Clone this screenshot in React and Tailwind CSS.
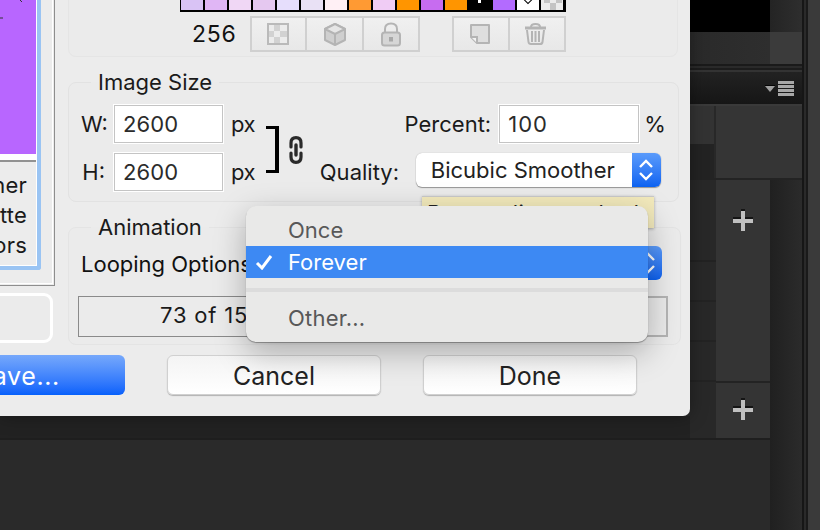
import React from "react";

const font = { fontFamily: "Inter, 'Liberation Sans', sans-serif" };

const swatches = ["#d9c3f5", "#e0b6f5", "#f0d7f5", "#e5c8f0", "#e6defc", "#e9e1f5", "#fff0f5", "#ff9a33", "#f0ccf5", "#ff9500", "#c76cf0", "#ff9500", "#000000", "#b36bff", "#ffffff", "#ececec"];

function Swatch({ color, i }) {
  return (
    <div className="w-[22px] h-[10px] relative overflow-hidden" style={{ background: color }}>
      {i === 12 && <div className="absolute left-[9px] top-0 w-[3px] h-[3px] bg-white" />}
      {i === 14 && <div className="absolute left-[8px] top-[-3px] w-[6px] h-[6px] border border-black rotate-45" />}
      {i === 15 && (
        <svg width="22" height="10" className="absolute left-0 top-0">
          <rect x="3" y="0" width="6" height="3" fill="#c4c4c4" />
          <rect x="9" y="3" width="6" height="7" fill="#c4c4c4" />
          <rect x="15" y="0" width="6" height="3" fill="#c4c4c4" />
        </svg>
      )}
    </div>
  );
}

function IconBtn({ children, last, w }) {
  return (
    <div className={`h-full flex items-center justify-center ${w} ${last ? "" : "border-r-2 border-[#d0d0d0]"}`}>
      {children}
    </div>
  );
}

const Checker = () => (
  <svg width="22" height="22" viewBox="0 0 22 22">
    <rect x="1" y="1" width="20" height="20" fill="#ececec" stroke="#bababa" strokeWidth="2" />
    <rect x="7" y="2" width="6" height="6" fill="#d2d2d2" />
    <rect x="13" y="8" width="7" height="6" fill="#d2d2d2" />
    <rect x="2" y="8" width="5" height="6" fill="#d2d2d2" />
    <rect x="7" y="14" width="6" height="6" fill="#d2d2d2" />
  </svg>
);
const Cube = () => (
  <svg width="24" height="25" viewBox="0 0 24 25">
    <path d="M12 2 L22 7 V18 L12 23 L2 18 V7 Z" fill="#cfcfcf" stroke="#b4b4b4" strokeWidth="2" strokeLinejoin="round" />
    <path d="M2 7 L12 12 L22 7 L12 2 Z" fill="#e6e6e6" stroke="#b4b4b4" strokeWidth="2" strokeLinejoin="round" />
    <path d="M12 12 V23" stroke="#b4b4b4" strokeWidth="2" />
  </svg>
);
const Lock = () => (
  <svg width="20" height="25" viewBox="0 0 20 25">
    <path d="M4 11 V7 C4 3.5 6.5 1.5 10 1.5 C13.5 1.5 16 3.5 16 7 V11" fill="none" stroke="#b4b4b4" strokeWidth="2" />
    <rect x="1" y="10.5" width="18" height="13" rx="2.5" fill="#d6d6d6" stroke="#b4b4b4" strokeWidth="2" />
    <rect x="8" y="15" width="4" height="4.5" fill="#a8a8a8" />
  </svg>
);
const Note = () => (
  <svg width="20" height="20" viewBox="0 0 20 20">
    <path d="M1 1 H19 V19 H7 L1 13 Z" fill="#dedede" stroke="#b4b4b4" strokeWidth="2" strokeLinejoin="round" />
    <path d="M1 13 H7 V19" fill="#f2f2f2" stroke="#b4b4b4" strokeWidth="2" />
  </svg>
);
const Trash = () => (
  <svg width="23" height="22" viewBox="0 0 23 22">
    <path d="M1 5 H22" stroke="#b4b4b4" strokeWidth="3" />
    <path d="M7 4 C7 2 8.5 1 11.5 1 C14.5 1 16 2 16 4" fill="none" stroke="#b4b4b4" strokeWidth="2" />
    <path d="M3 7 L4.5 19 C4.7 20.5 6 21 7 21 H16 C17 21 18.3 20.5 18.5 19 L20 7" fill="none" stroke="#b4b4b4" strokeWidth="2" />
    <path d="M8 8 V19 M11.5 8 V19 M15 8 V19" stroke="#b4b4b4" strokeWidth="2" />
  </svg>
);
const Link = () => (
  <svg width="14" height="28" viewBox="0 0 14 28">
    <path d="M2 11 V7 C2 3.5 4 1.7 7 1.7 C10 1.7 12 3.5 12 7 V11 M2 17 V21 C2 24.5 4 26.3 7 26.3 C10 26.3 12 24.5 12 21 V17" fill="none" stroke="#2a2a2a" strokeWidth="3.2" strokeLinecap="round" />
    <path d="M7 9 V19" stroke="#2a2a2a" strokeWidth="3.4" strokeLinecap="round" />
  </svg>
);
const Updown = () => (
  <svg width="18" height="26" viewBox="0 0 18 26">
    <path d="M3 10 L9 4 L15 10 M3 16 L9 22 L15 16" fill="none" stroke="#fff" strokeWidth="2.4" />
  </svg>
);
const Plus = () => (
  <svg width="20" height="22" viewBox="0 0 20 22">
    <rect x="8" y="0" width="4" height="2" fill="#151515" />
    <rect x="0" y="8" width="20" height="2" fill="#151515" />
    <rect x="8" y="2" width="4" height="20" fill="#c0c0c0" />
    <rect x="0" y="10" width="20" height="4" fill="#c0c0c0" />
  </svg>
);

const inputCls = "bg-white border border-[#c4c4c4] outline outline-1 outline-white h-[38px] flex items-center pl-[8px] text-[#2b2b2b]";

function Legend({ children }) {
  return <legend className="ml-[10px] px-[7px] h-[24px] leading-[24px] text-[#1a1a1a]">{children}</legend>;
}

function SizeRow({ label, mt }) {
  return (
    <div className={`flex items-center h-[38px] ${mt}`}>
      <span className="w-[24px] text-right text-[#1a1a1a]">{label}</span>
      <div className={`${inputCls} w-[109px] ml-[9px] tracking-[0.1px]`}>2600</div>
      <span className="ml-[8px] text-[#1a1a1a] tracking-[-0.6px]">px</span>
    </div>
  );
}

function Dialog() {
  return (
    <div className="relative z-10 h-[416px] bg-[#ececec] rounded-br-[7px] overflow-hidden flex flex-col text-[22px] shrink-0 shadow-[0_0_18px_rgba(0,0,0,0.35)]" style={font}>
      <div className="flex h-[343px] shrink-0">
        {/* left column */}
        <div className="w-[55px] shrink-0 flex flex-col">
          <div className="h-[286px] border-r border-b border-[#8e8e8e] pr-[1px] pb-[1px] shrink-0">
            <div className="h-full border-r border-b border-white pr-[11px] pb-[13px]">
              <div className="h-full border-r-[4px] border-b-[4px] border-[#9ac4f3] rounded-br-[3px]">
                <div className="h-full border-r border-b border-white flex flex-col">
                  <div className="h-[154px] bg-[#b866ff] shrink-0 overflow-hidden">
                    <svg width="36" height="20"><path d="M20 0 L22 2 M0 18 H3" stroke="#333" strokeWidth="1" /></svg>
                  </div>
                  <div className="h-[6px] bg-white shrink-0" />
                  <div className="h-[2px] bg-[#929292] shrink-0" />
                  <div className="flex-1 flex flex-col items-end pt-[8px] pr-[9px] text-[#1a1a1a] leading-[30px] overflow-hidden whitespace-nowrap tracking-[0.2px]">
                    <span>Other</span>
                    <span>Palette</span>
                    <span>Colors</span>
                  </div>
                </div>
              </div>
            </div>
          </div>
          <div className="mt-[7px] -ml-[20px] h-[50px] w-[73px] border-[3px] border-white rounded-[9px] bg-[#ebebeb] shrink-0" />
        </div>
        {/* right column */}
        <div className="ml-[13px] w-[610px] shrink-0 flex flex-col">
          <div className="h-[57px] shrink-0 border-x border-b border-[#e5e5e5] rounded-b-[8px] bg-[#ebebeb]">
            <div className="ml-[111px] w-[386px] bg-black flex gap-[2px] px-[1px] pb-[2px]">
              {swatches.map((c, i) => <Swatch key={i} color={c} i={i} />)}
            </div>
            <div className="flex items-center mt-[4px] h-[36px]">
              <span className="ml-[123px] w-[58px] text-[#111] tracking-[0.8px] text-[23px]">256</span>
              <div className="flex h-full w-[170px] border-2 border-[#d0d0d0] bg-gradient-to-b from-[#f0f0f0] to-[#e8e8e8]">
                <IconBtn w="w-[55px] pr-[2px]"><Checker /></IconBtn>
                <IconBtn w="w-[57px]"><Cube /></IconBtn>
                <IconBtn w="flex-1 pr-[1px]" last><Lock /></IconBtn>
              </div>
              <div className="flex h-full w-[114px] ml-[32px] border-2 border-[#d0d0d0] bg-gradient-to-b from-[#f0f0f0] to-[#e8e8e8]">
                <IconBtn w="w-[56px] pr-[2px]"><Note /></IconBtn>
                <IconBtn w="flex-1 pr-[4px]" last><Trash /></IconBtn>
              </div>
            </div>
          </div>

          <fieldset className="mt-[13px] h-[132px] shrink-0 border border-[#e2e2e2] rounded-[8px] px-[12px] bg-[#ebebeb]">
            <Legend>Image Size</Legend>
            <div className="flex pt-[11px]">
              <div className="flex flex-col">
                <SizeRow label="W:" />
                <SizeRow label="H:" mt="mt-[10px]" />
              </div>
              <div className="ml-[11px] mt-[21px] w-[13px] h-[47px] border-y-[3px] border-r-[4px] border-black shrink-0" />
              <div className="ml-[10px] mt-[31px] shrink-0"><Link /></div>
              <div className="ml-[17px] w-[346px] shrink-0 flex flex-col">
                <div className="flex items-center justify-end h-[38px]">
                  <span className="text-[#1a1a1a]">Percent:</span>
                  <div className={`${inputCls} w-[140px] ml-[8px] tracking-[1px]`}>100</div>
                  <span className="ml-[5px] text-[#1a1a1a]">%</span>
                </div>
                <div className="flex items-center h-[38px] mt-[10px]">
                  <span className="w-[96px] shrink-0 text-[#1a1a1a]">Quality:</span>
                  <div className="w-[245px] h-[34px] mb-[4px] bg-white rounded-[6px] flex items-center overflow-hidden shadow-[0_1px_1px_rgba(0,0,0,0.35),0_0_1px_rgba(0,0,0,0.3)]">
                    <span className="flex-1 pl-[15px] text-[#222] whitespace-nowrap">Bicubic Smoother</span>
                    <div className="w-[29px] h-full bg-gradient-to-b from-[#5a9bfb] to-[#0b62f1] flex items-center justify-center"><Updown /></div>
                  </div>
                </div>
              </div>
            </div>
          </fieldset>

          <fieldset className="mt-[13px] h-[130px] shrink-0 border border-[#e4e4e4] rounded-[8px] px-[12px] bg-[#ebebeb]">
            <Legend>Animation</Legend>
            <div className="flex items-center h-[34px] mt-[7px]">
              <span className="text-[#111] whitespace-nowrap pt-[2px]">Looping Options:</span>
              <div className="ml-auto mr-[6px] w-[200px] h-full rounded-[6px] bg-gradient-to-b from-[#5a9bfb] to-[#0b62f1] flex items-center justify-end pr-[5px]"><Updown /></div>
            </div>
            <div className="flex -ml-[3px] w-[590px] h-[41px] mt-[16px]">
              <div className="flex-1 border-l border-y border-[#8a8a8a] flex items-center pl-[81px] pb-[2px] text-[#1a1a1a] tracking-[0.8px]">73 of 156</div>
              <div className="w-[40px] border-2 border-l-0 border-[#b4b4b4] flex items-center justify-start text-[#333] leading-none">·</div>
            </div>
          </fieldset>
        </div>
      </div>

      <div className="flex mt-[12px] text-[25px]">
        <div className="w-[214px] -ml-[89px] h-[40px] pt-[3px] shrink-0 rounded-[6px] bg-gradient-to-b from-[#76a8fb] to-[#0560fb] text-white flex items-center justify-center tracking-[0.6px]">Save...</div>
        <div className="w-[214px] ml-[42px] h-[40px] pt-[3px] shrink-0 rounded-[6px] bg-gradient-to-b from-[#f4f4f4] to-white border border-[#d0d0d0] shadow-[0_1px_1px_rgba(0,0,0,0.25)] text-[#222] flex items-center justify-center">Cancel</div>
        <div className="w-[214px] ml-[42px] h-[40px] pt-[3px] shrink-0 rounded-[6px] bg-gradient-to-b from-[#f4f4f4] to-white border border-[#d0d0d0] shadow-[0_1px_1px_rgba(0,0,0,0.25)] text-[#222] flex items-center justify-center">Done</div>
      </div>

      {/* tooltip behind the menu */}
      <div className="absolute left-[422px] top-[196px] w-[232px] h-[32px] bg-[#f3eabc] border-t border-[#c9c9c9] shadow-[0_1px_3px_rgba(0,0,0,0.3)] pl-[5px] leading-[32px] text-[#222] whitespace-nowrap overflow-hidden tracking-[0.4px]">Resampling method:</div>

      {/* popup menu */}
      <div className="absolute left-[246px] top-[206px] w-[402px] h-[136px] rounded-[10px] bg-[#e9e9e8] pt-[8px] shadow-[0_1px_1px_rgba(0,0,0,0.35),0_10px_32px_rgba(0,0,0,0.28)] text-[22px]">
        <div className="h-[32px] flex items-center pl-[42px] text-[#585858]">Once</div>
        <div className="relative h-[32px] flex items-center pl-[42px] bg-[#3d89f3] text-white">
          <svg width="18" height="16" viewBox="0 0 18 16" className="absolute left-[9px] top-[8px]">
            <path d="M2 9 L7 14 L16 2" fill="none" stroke="#fff" strokeWidth="3" />
          </svg>
          Forever
        </div>
        <div className="h-[4px] my-[10px] bg-[#dcdcdc]" />
        <div className="h-[32px] flex items-center pl-[42px] text-[#585858] tracking-[0.2px]">Other...</div>
      </div>
    </div>
  );
}

function DarkSide() {
  return (
    <div className="w-[130px] h-[530px] flex shrink-0 overflow-hidden">
      <div className="w-[112px] flex flex-col shrink-0 bg-[#1b1b1b]">
        <div className="flex h-[32px] shrink-0">
          <div className="w-[80px] bg-black" />
          <div className="w-[32px] bg-gradient-to-r from-[#242424] to-[#2e2e2e]" />
        </div>
        <div className="flex h-[32px] shrink-0">
          <div className="w-[80px] bg-gradient-to-r from-[#2a2a2a] to-[#2e2e2e]" />
          <div className="w-[32px] bg-[#3b3b3b]" />
        </div>
        <div className="h-[2px] bg-[#1a1a1a] shrink-0" />
        <div className="h-[2px] bg-[#2a2a2a] shrink-0" />
        <div className="h-[2px] bg-[#1c1c1c] shrink-0" />
        <div className="h-[2px] bg-[#333333] shrink-0" />
        <div className="h-[32px] shrink-0 bg-gradient-to-b from-[#222222] to-[#161616] flex items-center justify-end pr-[8px]">
          <svg width="12" height="8" viewBox="0 0 12 8" className="mr-[2px] mt-[2px]">
            <path d="M1 1 H11 L6 7 Z" fill="#a0a0a0" />
            <path d="M1 0 H11 V1 H1 Z" fill="#050505" />
          </svg>
          <div className="w-[16px] flex flex-col gap-[1px]">
            <div className="h-[3px] bg-[#a8a8a8]" />
            <div className="h-[3px] bg-[#a8a8a8]" />
            <div className="h-[3px] bg-[#a8a8a8]" />
            <div className="h-[3px] bg-[#a8a8a8]" />
          </div>
        </div>
        <div className="h-[2px] bg-[#3a3a3a] shrink-0" />
        <div className="flex h-[72px] shrink-0">
          <div className="w-[24px] flex flex-col shrink-0">
            <div className="h-[38px] bg-[#333333]" />
            <div className="h-[34px] bg-[#232323]" />
          </div>
          <div className="w-[2px] bg-[#282828]" />
          <div className="flex-1 bg-[#353535]" />
        </div>
        <div className="h-[2px] bg-[#232323] shrink-0" />
        <div className="flex h-[258px] shrink-0">
          <div className="w-[26px] flex flex-col shrink-0 bg-[#282828]">
            <div className="h-[82px] border-b-2 border-[#222222]" />
            <div className="h-[40px] border-b-2 border-[#232323]" />
            <div className="h-[40px] border-b-2 border-[#232323]" />
            <div className="h-[40px] border-b-2 border-[#232323]" />
            <div className="flex-1" />
          </div>
          <div className="w-[54px] flex flex-col shrink-0 bg-[#343434]">
            <div className="h-[203px] border-b-2 border-[#232323] flex justify-center pt-[29px]"><Plus /></div>
            <div className="flex-1 flex justify-center pt-[15px]"><Plus /></div>
          </div>
          <div className="flex-1 bg-gradient-to-r from-[#202020] to-[#2b2b2b]" />
        </div>
        <div className="flex flex-1">
          <div className="w-[80px] border-t-2 border-[#1f1f1f] bg-[#2a2a2a]" />
          <div className="flex-1 bg-gradient-to-r from-[#202020] to-[#2b2b2b]" />
        </div>
      </div>
      <div className="w-[2px] bg-[#161616]" />
      <div className="w-[2px] bg-[#2a2a2a]" />
      <div className="w-[2px] bg-[#1a1a1a]" />
      <div className="flex-1 bg-[#3a3a3a]" />
    </div>
  );
}

export default function App() {
  return (
    <div className="w-[820px] h-[530px] flex overflow-hidden bg-[#2a2a2a]">
      <div className="w-[690px] h-[530px] shrink-0 flex flex-col">
        <Dialog />
        <div className="h-[22px] bg-[#222222] shrink-0" />
        <div className="h-[2px] bg-[#1e1e1e] shrink-0" />
        <div className="flex-1 bg-[#2a2a2a]" />
      </div>
      <DarkSide />
    </div>
  );
}
